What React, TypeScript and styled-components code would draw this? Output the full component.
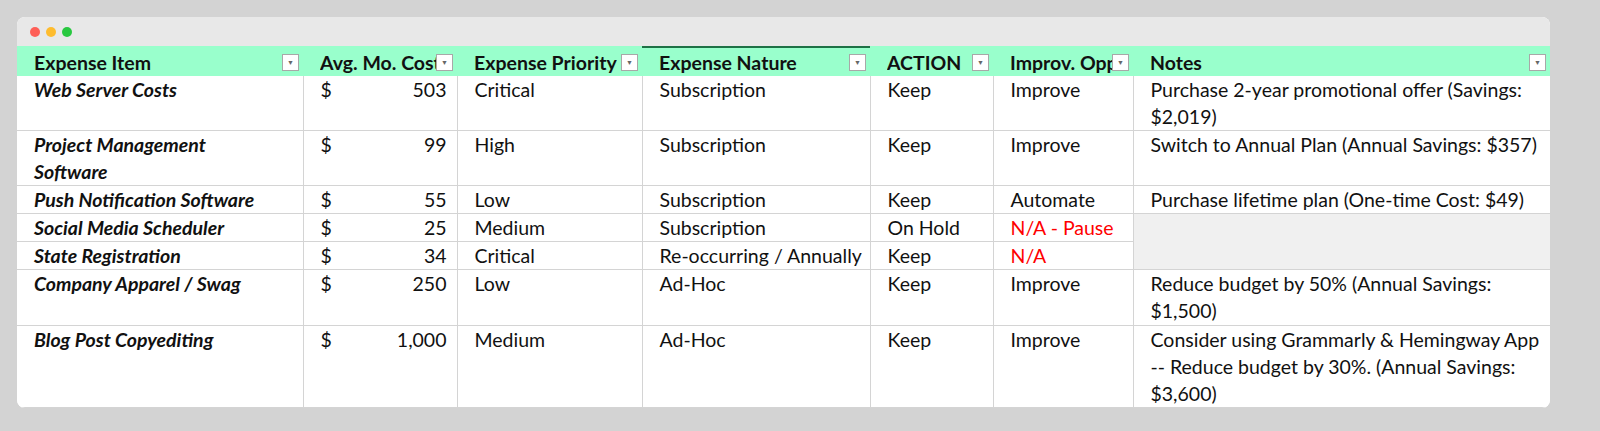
import styled, { createGlobalStyle } from 'styled-components'

const Global = createGlobalStyle`
  html, body { overflow: hidden; }
  body { margin: 0; background: #d3d3d3; font-family: Lato, "Liberation Sans", sans-serif; }
`

const Page = styled.div`
  width: 1600px;
  height: 431px;
  padding: 17px 0 0 17px;
  box-sizing: border-box;
`

const Window = styled.div`
  background: #fff;
  border-radius: 8px;
  overflow: hidden;
  width: 1533px;
`

const TitleBar = styled.div`
  height: 29px;
  background: #e8e8e8;
  display: flex;
  align-items: center;
  gap: 6px;
  padding-left: 13px;
`

const Dot = styled.span<{ $c: string }>`
  width: 10px;
  height: 10px;
  border-radius: 50%;
  background: ${p => p.$c};
`

const Table = styled.table`
  border-collapse: collapse;
  table-layout: fixed;
  width: 1533px;
  font-size: 19.5px;
  color: #111;
`

const Th = styled.th<{ $sel?: boolean }>`
  background: #99ffcc;
  height: 28px;
  padding: 0 4px 0 17px;
  text-align: left;
  font-weight: 700;
  border-top: 2px solid ${p => (p.$sel ? '#1e7145' : '#99ffcc')};
  white-space: nowrap;
  overflow: hidden;
`

const HeadInner = styled.div`
  display: flex;
  align-items: center;
  justify-content: space-between;
  overflow: hidden;
`

const Label = styled.span`
  overflow: hidden;
`

const Filter = styled.span`
  flex: none;
  width: 15px;
  height: 15px;
  background: #fff;
  border: 1px solid #a8a8a8;
  font-size: 7px;
  color: #666;
  display: flex;
  align-items: center;
  justify-content: center;
`

const Td = styled.td<{ $h?: number; $red?: boolean; $grey?: boolean }>`
  height: ${p => (p.$h ? p.$h - 1 : 26)}px;
  padding: 0 6px 0 17px;
  vertical-align: top;
  line-height: 27px;
  border-left: 1px solid #d4d4d4;
  border-bottom: 1px solid #d4d4d4;
  color: ${p => (p.$red ? '#ff0000' : '#111')};
  background: ${p => (p.$grey ? '#f0f0f0' : '#fff')};
  white-space: normal;
  &:first-child { border-left: none; }
`

const ItemCell = styled(Td)`
  font-weight: 700;
  font-style: italic;
  padding-right: 30px;
`

const Money = styled.div`
  display: flex;
  justify-content: space-between;
  padding-right: 0;
`

const heads = ['Expense Item', 'Avg. Mo. Cost', 'Expense Priority', 'Expense Nature', 'ACTION', 'Improv. Opp', 'Notes']
const widths = [286, 154, 185, 228, 123, 140, 417]

type Row = [string, string, string, string, string, string, string | null, number]
const rows: Row[] = [
  ['Web Server Costs', '503', 'Critical', 'Subscription', 'Keep', 'Improve', 'Purchase 2-year promotional offer (Savings: $2,019)', 54],
  ['Project Management Software', '99', 'High', 'Subscription', 'Keep', 'Improve', 'Switch to Annual Plan (Annual Savings: $357)', 55],
  ['Push Notification Software', '55', 'Low', 'Subscription', 'Keep', 'Automate', 'Purchase lifetime plan (One-time Cost: $49)', 28],
  ['Social Media Scheduler', '25', 'Medium', 'Subscription', 'On Hold', 'N/A - Pause', '', 27],
  ['State Registration', '34', 'Critical', 'Re-occurring / Annually', 'Keep', 'N/A', null, 27],
  ['Company Apparel / Swag', '250', 'Low', 'Ad-Hoc', 'Keep', 'Improve', 'Reduce budget by 50% (Annual Savings: $1,500)', 56],
  ['Blog Post Copyediting', '1,000', 'Medium', 'Ad-Hoc', 'Keep', 'Improve', 'Consider using Grammarly & Hemingway App -- Reduce budget by 30%. (Annual Savings: $3,600)', 82],
]

export default function App() {
  return (
    <Page>
      <Global />
      <Window>
        <TitleBar>
          <Dot $c="#fe5f57" />
          <Dot $c="#febc2e" />
          <Dot $c="#28c840" />
        </TitleBar>
        <Table>
          <colgroup>
            {widths.map((w, i) => <col key={i} style={{ width: w }} />)}
          </colgroup>
          <thead>
            <tr>
              {heads.map((h, i) => (
                <Th key={h} $sel={i === 3}>
                  <HeadInner>
                    <Label>{h}</Label>
                    <Filter>▼</Filter>
                  </HeadInner>
                </Th>
              ))}
            </tr>
          </thead>
          <tbody>
            {rows.map(r => (
              <tr key={r[0]}>
                <ItemCell $h={r[7]}>{r[0]}</ItemCell>
                <Td $h={r[7]} style={{ paddingRight: 10 }}>
                  <Money><span>$</span><span>{r[1]}</span></Money>
                </Td>
                <Td $h={r[7]}>{r[2]}</Td>
                <Td $h={r[7]} style={{ whiteSpace: 'nowrap', paddingRight: 0, overflow: 'hidden' }}>{r[3]}</Td>
                <Td $h={r[7]}>{r[4]}</Td>
                <Td $h={r[7]} $red={r[5].startsWith('N/A')} style={{ whiteSpace: 'nowrap' }}>{r[5]}</Td>
                {r[6] === '' ? <Td rowSpan={2} $grey /> : r[6] === null ? null : <Td $h={r[7]}>{r[6]}</Td>}
              </tr>
            ))}
          </tbody>
        </Table>
      </Window>
    </Page>
  )
}
